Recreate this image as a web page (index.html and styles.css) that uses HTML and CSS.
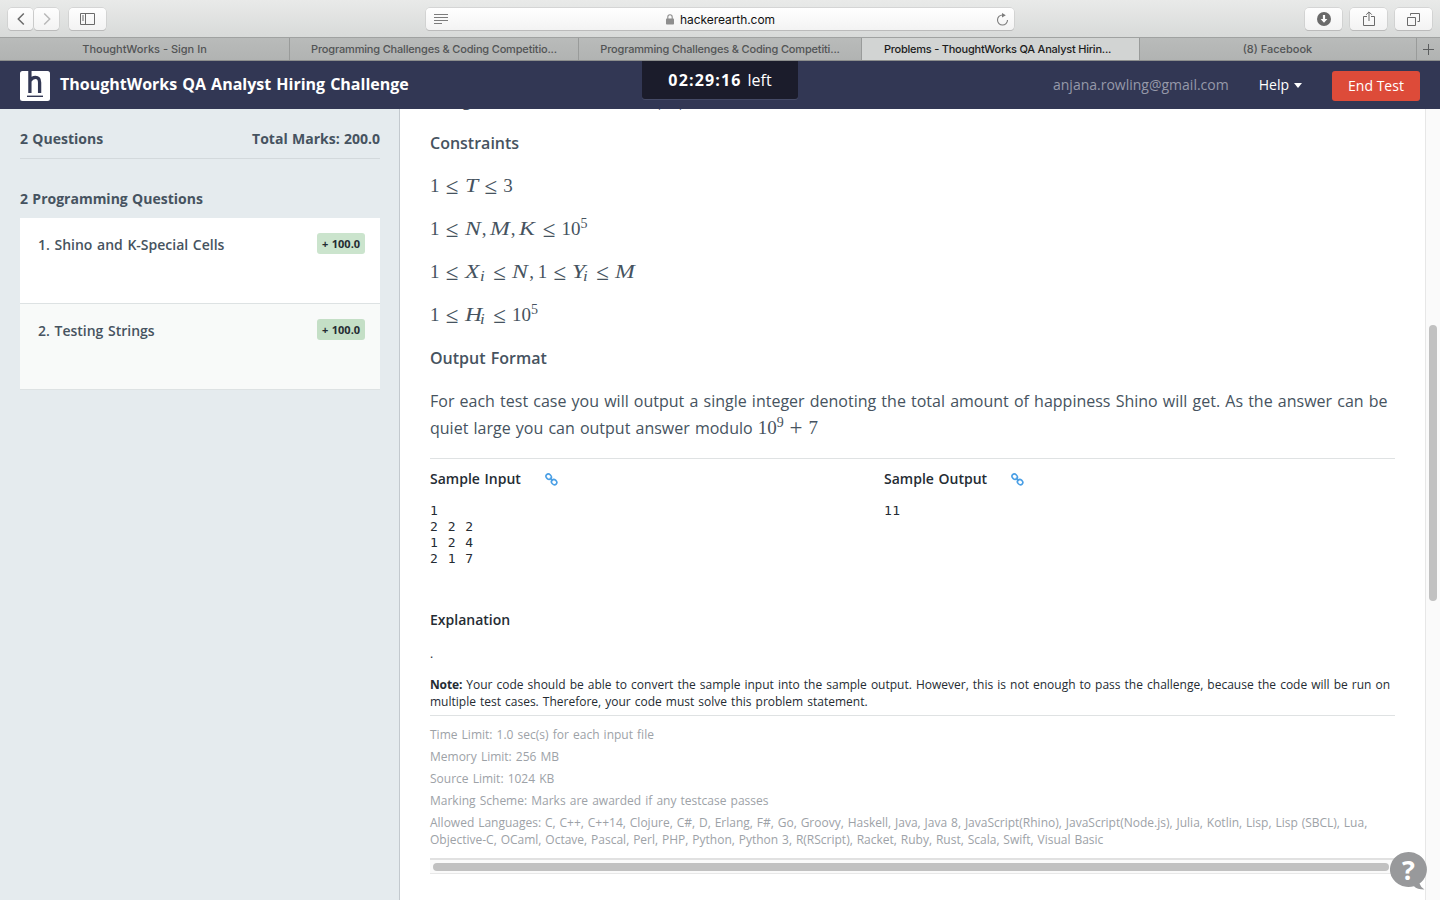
FILE: index.html
```html
<!DOCTYPE html>
<html lang="en">
<head>
<meta charset="utf-8">
<title>Problems - ThoughtWorks QA Analyst Hiring Challenge</title>
<link rel="stylesheet" href="styles.css">
</head>
<body>
<div class="toolbar">
  <div class="tool-left">
    <div class="pair">
      <div class="btn nav"><svg width="8" height="14" viewBox="0 0 8 14"><path d="M6.8 1.5 1.3 7l5.500 5.500" fill="none" stroke="#6a6a6a" stroke-width="1.500"/></svg></div>
      <div class="btn nav"><svg width="8" height="14" viewBox="0 0 8 14"><path d="M1.200 1.500 6.700 7l-5.500 5.500" fill="none" stroke="#b9b9b9" stroke-width="1.500"/></svg></div>
    </div>
    <div class="btn wide"><svg width="15" height="12" viewBox="0 0 15 12"><path d="M.5.5h14v11H.5zM5.500.5v11M2 3h2M2 5h2M2 7h2" fill="none" stroke="#6a6a6a"/></svg></div>
  </div>
  <div class="address">
    <svg width="14" height="11" viewBox="0 0 14 11"><path d="M0 .5h14M0 3.500h14M0 6.500h14M0 9.500h8" stroke="#7c7c7c" fill="none"/></svg>
    <div class="site">
      <svg width="8" height="11" viewBox="0 0 8 11"><rect y="4.500" width="8" height="6" rx=".8" fill="#8e8e8e"/><path d="M1.800 5V3a2.200 2.200 0 0 1 4.400 0v2" fill="none" stroke="#8e8e8e" stroke-width="1.100"/></svg>
      <span class="url">hackerearth.com</span>
    </div>
    <svg width="13" height="13" viewBox="0 0 13 13"><path d="M6.500 2A5 5 0 1 0 11.500 7" fill="none" stroke="#7c7c7c" stroke-width="1.100"/><path d="M6 0 9.800 2.300 6 4.600z" fill="#7c7c7c"/></svg>
  </div>
  <div class="tool-right">
    <div class="btn wide"><svg width="14" height="14" viewBox="0 0 14 14"><circle cx="7" cy="7" r="7" fill="#6a6a6a"/><path d="M5.900 3h2.200v4h2.300L7 10.800 3.600 7h2.300z" fill="#fff"/></svg></div>
    <div class="btn wide"><svg width="12" height="16" viewBox="0 0 12 16"><path d="M4 5.500H.5v9h11v-9H8M6 10V1M3.200 3.700 6 .9l2.800 2.800" fill="none" stroke="#6a6a6a"/></svg></div>
    <div class="btn wide"><svg width="13" height="13" viewBox="0 0 13 13"><path d="M.5 4.500h8v8h-8zM3.500 2.500v-2h9v8h-2" fill="none" stroke="#6a6a6a"/></svg></div>
  </div>
</div>
<div class="tabs">
  <div class="tab t1">ThoughtWorks - Sign In</div>
  <div class="tab t2">Programming Challenges &amp; Coding Competitio...</div>
  <div class="tab t3">Programming Challenges &amp; Coding Competiti...</div>
  <div class="tab t4 active">Problems - ThoughtWorks QA Analyst Hirin...</div>
  <div class="tab t5">(8) Facebook</div>
  <div class="tab plus"><svg width="11" height="11" viewBox="0 0 11 11"><path d="M5.500 0v11M0 5.500h11" stroke="#5c5e5f" fill="none"/></svg></div>
</div>
<header class="header">
  <div class="brand">
    <svg width="30" height="30" viewBox="0 0 30 30"><rect width="30" height="30" rx="2.500" fill="#fff"/><path d="M9.900 0v22M10 9.800Q12 6.400 15.400 6.400 19.600 6.400 19.600 11.400V22" fill="none" stroke="#323754" stroke-width="3.300"/><path d="M7 25.300h16" stroke="#323754" stroke-width="1.400"/></svg>
    <span class="title">ThoughtWorks QA Analyst Hiring Challenge</span>
  </div>
  <div class="timer"><b>02:29:16</b><span>left</span></div>
  <div class="account">
    <span class="email">anjana.rowling@gmail.com</span>
    <span class="help">Help<i class="caret"></i></span>
    <span class="end">End Test</span>
  </div>
</header>
<div class="page">
  <aside class="sidebar">
    <div class="summary"><span>2 Questions</span><span>Total Marks: 200.0</span></div>
    <div class="group">2 Programming Questions</div>
    <div class="question"><span class="name">1. Shino and K-Special Cells</span><span class="marks">+ 100.0</span></div>
    <div class="question alt"><span class="name">2. Testing Strings</span><span class="marks">+ 100.0</span></div>
  </aside>
  <main class="main">
    <div class="content">
      <p class="lead"><span class="l1">along</span><span class="l2">the cells, H</span><span>(X<sub>i</sub>, Y<sub>i</sub>),</span></p>
      <p class="strong">Constraints</p>
      <p class="math">1<em>≤</em><i class="wt">T</i><em>≤</em>3</p>
      <p class="math">1<em>≤</em><i class="wn">N</i><u>,</u><i class="wm">M</i><u>,</u><i class="wn">K</i><em>≤</em>10<sup>5</sup></p>
      <p class="math">1<em>≤</em><i class="wx">X</i><sub>i</sub><em>≤</em><i class="wn">N</i><u>,</u>1<em>≤</em><i class="wy">Y</i><sub>i</sub><em>≤</em><i class="wm">M</i></p>
      <p class="math">1<em>≤</em><i class="wx">H</i><sub>i</sub><em>≤</em>10<sup>5</sup></p>
      <p class="strong">Output Format</p>
      <p class="text">For each test case you will output a single integer denoting the total amount of happiness Shino will get. As the answer can be<br>quiet large you can output answer modulo <span class="formula">10<sup>9</sup><em>+</em>7</span></p>
      <section class="samples">
        <div class="sample">
          <h4>Sample Input<svg class="link" width="13" height="13" viewBox="0 0 13 13"><g fill="none" stroke="#4a9fe5" stroke-width="1.600"><ellipse cx="3.700" cy="3.700" rx="2.900" ry="2.400" transform="rotate(45 3.700 3.700)"/><ellipse cx="9.100" cy="9.100" rx="2.900" ry="2.400" transform="rotate(45 9.100 9.100)"/><path d="M4.800 4.800l3.200 3.200"/></g></svg></h4>
          <pre>1
2 2 2
1 2 4
2 1 7</pre>
        </div>
        <div class="sample">
          <h4>Sample Output<svg class="link" width="13" height="13" viewBox="0 0 13 13"><g fill="none" stroke="#4a9fe5" stroke-width="1.600"><ellipse cx="3.700" cy="3.700" rx="2.900" ry="2.400" transform="rotate(45 3.700 3.700)"/><ellipse cx="9.100" cy="9.100" rx="2.900" ry="2.400" transform="rotate(45 9.100 9.100)"/><path d="M4.800 4.800l3.200 3.200"/></g></svg></h4>
          <pre>11</pre>
        </div>
      </section>
      <h4>Explanation</h4>
      <div class="dot">.</div>
      <div class="note"><b>Note:</b> Your code should be able to convert the sample input into the sample output. However, this is not enough to pass the challenge, because the code will be run on<br>multiple test cases. Therefore, your code must solve this problem statement.</div>
      <div class="limits">
        <div>Time Limit: 1.0 sec(s) for each input file</div>
        <div>Memory Limit: 256 MB</div>
        <div>Source Limit: 1024 KB</div>
        <div>Marking Scheme: Marks are awarded if any testcase passes</div>
        <div class="langs">Allowed Languages: C, C++, C++14, Clojure, C#, D, Erlang, F#, Go, Groovy, Haskell, Java, Java 8, JavaScript(Rhino), JavaScript(Node.js), Julia, Kotlin, Lisp, Lisp (SBCL), Lua,<br>Objective-C, OCaml, Octave, Pascal, Perl, PHP, Python, Python 3, R(RScript), Racket, Ruby, Rust, Scala, Swift, Visual Basic</div>
      </div>
      <div class="hscroll"><div class="hthumb"></div></div>
    </div>
    <div class="vscroll"><div class="vthumb"></div></div>
  </main>
</div>
<div class="chat"><svg width="38" height="38" viewBox="0 0 38 38"><path d="M18.500 0a18.500 17.500 0 0 1 11 31.500Q30.500 35 34.500 37.500 27 37.500 24 34.200A18.500 17.500 0 1 1 18.500 0z" fill="#98999b"/></svg><b>?</b></div>
</body>
</html>
```
FILE: styles.css
```css
* { box-sizing: border-box; }
body { margin: 0; width: 1440px; height: 900px; overflow: hidden; position: relative; display: flex; flex-direction: column; font-family: "Open Sans", sans-serif; background: #fff; color: #252c33; }
svg { display: block; flex: none; }
h4, p, pre { margin: 0; }

.toolbar { height: 37px; flex: none; display: flex; padding: 8px 8px 0; background: linear-gradient(#e9eae9, #d8dad9); font-family: Inter, sans-serif; }
.tool-left, .tool-right, .pair { display: flex; }
.tool-left { gap: 10px; width: 418px; }
.pair { gap: 1px; }
.tool-right { flex: 1; gap: 8px; justify-content: flex-end; }
.btn { height: 22px; border-radius: 4px; background: linear-gradient(#fefefe, #f3f3f3); box-shadow: 0 0 0 .5px #c4c4c4, 0 1px 0 #b3b3b3; display: flex; align-items: center; justify-content: center; }
.nav { width: 25px; }
.wide { width: 37px; }
.address { width: 588px; height: 22px; border-radius: 4px; background: linear-gradient(#fff, #f3f3f3); box-shadow: 0 0 0 .5px #c4c4c4, 0 1px 0 #b3b3b3; display: flex; align-items: center; justify-content: space-between; padding: 0 5px 0 8px; }
.site { display: flex; align-items: center; gap: 6px; color: #111; font-size: 12px; margin-right: 3px; }
.url { letter-spacing: -.06px; }

.tabs { height: 24px; flex: none; display: flex; border-top: 1px solid #a0a2a1; border-bottom: 1px solid #8c8e8d; background: linear-gradient(#b9bbba, #b1b3b2); font: 500 11px Inter, sans-serif; color: #525455; }
.tab { display: flex; align-items: center; justify-content: center; border-right: 1px solid #999b9a; white-space: nowrap; }
.t1 { width: 290px; }
.t2 { width: 289px; letter-spacing: -.17px; }
.t3 { width: 283px; letter-spacing: -.17px; }
.t4 { width: 278px; padding-right: 7px; padding-left: 0; letter-spacing: -.2px; }
.t4.active { padding-right: 6px; letter-spacing: -.23px; }
.t5 { width: 277px; padding-right: 1px; }
.plus { width: 23px; border: 0; }
.active { background: #d2d4d3; color: #1c1c1c; }

.header { height: 48px; flex: none; display: flex; justify-content: space-between; background: #323754; color: #fff; padding: 0 20px; }
.brand { display: flex; gap: 10px; padding-top: 10px; width: 500px; }
.title { font-size: 16px; font-weight: 700; line-height: 27px; white-space: nowrap; word-spacing: .9px; }
.timer { width: 156px; height: 38px; background: #1b1c2b; border-radius: 0 0 3px 3px; display: flex; justify-content: center; gap: 6px; font-size: 16px; line-height: 38px; box-shadow: 0 1px 0 #454a66; }
.timer b { letter-spacing: 1.15px; }
.account { display: flex; justify-content: flex-end; width: 500px; font-size: 14px; line-height: 48px; }
.email { color: #9699a9; margin-right: 30px; }
.help { display: flex; align-items: center; margin-right: 30px; }
.caret { border: 4px solid transparent; border-top: 5px solid #fff; border-bottom: 0; margin-left: 5px; }
.end { width: 88px; height: 30px; margin-top: 10px; background: #dd4b39; border-radius: 3px; line-height: 30px; text-align: center; }

.page { flex: 1; min-height: 0; display: flex; }
.sidebar { width: 400px; background: #e5ebee; border-right: 1px solid #c3c9ce; padding: 20px 19px 0 20px; color: #465360; font-size: 14px; font-weight: 700; line-height: 20px; word-spacing: .7px; }
.summary { display: flex; justify-content: space-between; height: 30px; border-bottom: 1px solid #d3d9dc; }
.group { margin: 30px 0 9px; }
.question { height: 86px; background: #fff; border-bottom: 1px solid #dde2e3; display: flex; justify-content: space-between; padding: 15px 15px 0 18px; font-weight: 600; }
.alt { background: #f8faf9; }
.alt .marks { background: #c4dfc6; }
.name { line-height: 23px; word-spacing: 1px; }
.marks { width: 48px; height: 21px; background: #cbe4cd; border-radius: 3px; text-align: center; font-size: 11px; font-weight: 700; line-height: 21px; color: #252c33; }

.main { flex: 1; display: flex; overflow: hidden; }
.content { width: 1025px; height: 813px; padding: 0 30px; margin-top: -22px; white-space: nowrap; word-spacing: 1px; }
.content p { font-size: 16px; line-height: 27px; height: 27px; margin-bottom: 16px; color: #465360; }
.content .text { height: 54px; margin-bottom: 18px; }
.lead { display: flex; }
.l1 { width: 64px; }
.l2 { width: 150px; }
.lead sub { font-size: 11px; line-height: 0; }
.strong { font-weight: 600; }

.math, .formula { font-family: "Liberation Serif", serif; word-spacing: 0; }
.content .math { font-size: 19px; margin: -1px 0 17px; }
.formula { font-size: 19px; line-height: 1; }
sub, sup { line-height: 0; }
.math sub, .math sup, .formula sup { display: inline-block; font-size: 14px; width: 6.700px; }
.math sup, .formula sup { vertical-align: 7px; }
.math sub { font-style: italic; vertical-align: -3px; transform: scaleX(1.2); transform-origin: left; }
em { display: inline-block; width: 25px; text-align: center; font: 23px/0 "Liberation Serif", serif; vertical-align: -2px; }
.formula em { vertical-align: -1px; }
.math i { display: inline-block; transform: scaleX(1.25); transform-origin: left; }
.math u { display: inline-block; width: 8.500px; text-decoration: none; }
.wt { width: 13.700px; }
.wn { width: 17.300px; }
.wm { width: 20.500px; }
.wx { width: 15.800px; }
.wy { width: 11px; }

.samples { border-top: 1px solid #dfe2e3; padding-top: 10px; display: grid; grid-template-columns: 454px 1fr; height: 152px; margin-top: -2px; }
h4 { font-size: 14px; line-height: 20px; font-weight: 600; display: flex; align-items: center; }
.link { margin-left: 24px; }
pre { margin-top: 14px; font: 13px/16px "DejaVu Sans Mono", monospace; letter-spacing: .3px; word-spacing: 1.400px; }
.dot { font-size: 12px; line-height: 17px; margin: 15px 0 14px; }
.note { font-size: 12px; line-height: 17px; height: 39px; word-spacing: .93px; }
.note b { letter-spacing: -.15px; }
.limits { border-top: 1px solid #dfe2e3; padding-top: 10px; font-size: 12px; line-height: 17px; color: #9da2a7; height: 143px; }
.limits div { margin-bottom: 5px; }
.limits .langs { word-spacing: .77px; }
.hscroll { height: 16px; border-top: 2px solid #e1e1e1; border-bottom: 1px solid #e8e8e8; background: #fafafa; padding: 3px 6px 0 3px; }
.hthumb { height: 8px; border-radius: 4px; background: #c1c1c1; }
.vscroll { width: 15px; background: #fafafa; border-left: 1px solid #e7e7e7; padding: 216px 3px 0; }
.vthumb { width: 8px; height: 276px; border-radius: 4px; background: #c1c1c1; }
.chat { position: absolute; left: 1390px; top: 852px; }
.chat b { position: absolute; left: 0; top: 0; width: 37px; text-align: center; font-size: 27px; line-height: 35px; color: #fff; }
```
